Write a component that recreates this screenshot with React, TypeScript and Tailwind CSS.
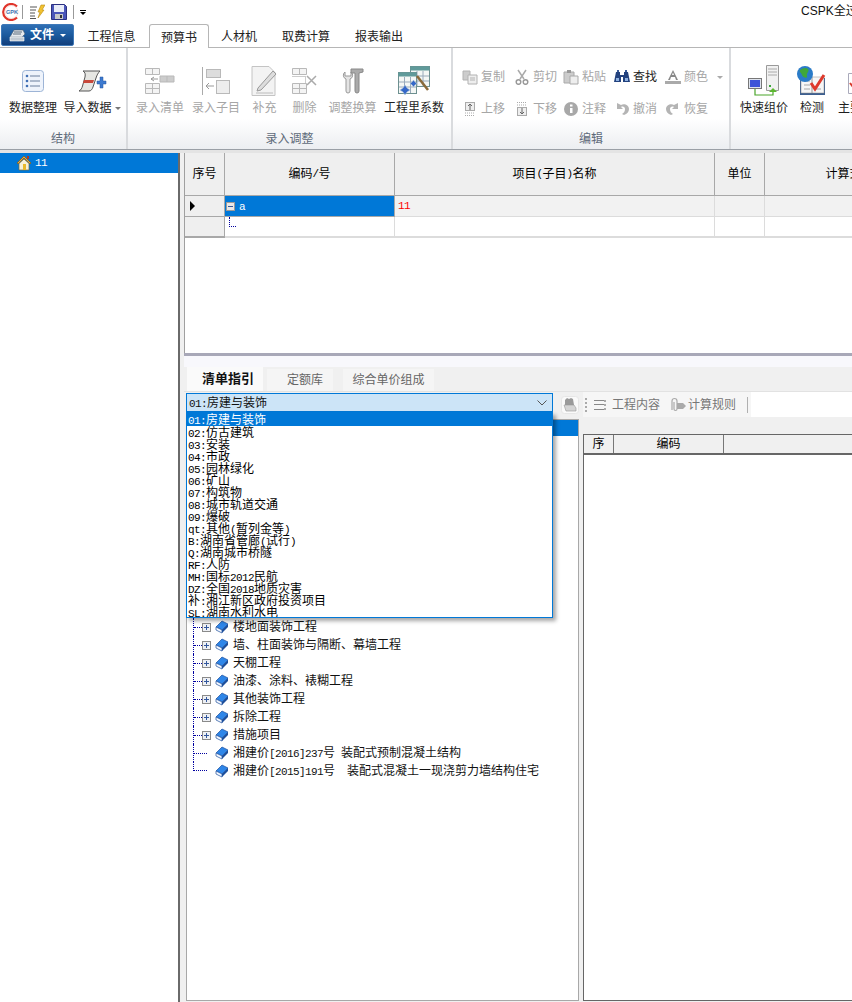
import React from 'react';

const font = "font-['Liberation_Sans','Noto_Sans_CJK_SC',sans-serif]";

function cn2(...c: (string | false | undefined)[]) {
  return c.filter(Boolean).join(' ');
}

// latin runs are narrower in the old app, 6px per char
function Mixed({ text }: { text: string }) {
  const parts = text.split(/([\x00-\x7f]+)/).filter(Boolean);
  return (
    <>
      {parts.map((p, i) =>
        /^[\x00-\x7f]/.test(p) ? (
          <span key={i} className="font-['Liberation_Mono',monospace] text-[11px] tracking-[-0.6px] whitespace-pre">{p}</span>
        ) : (
          <span key={i}>{p}</span>
        ),
      )}
    </>
  );
}

function AppLogo() {
  return (
    <svg width="18" height="18" viewBox="0 0 18 18">
      <circle cx="9" cy="9" r="7" fill="#fff" />
      <path d="M15 3.500A8 8 0 1 0 15 14.500" fill="none" stroke="#e0342a" strokeWidth="2.200" />
      <circle cx="9.500" cy="9" r="6.500" fill="none" stroke="#f3c4c0" strokeWidth=".6" />
      <text x="4" y="11" fontSize="5.500" fontWeight="700" fill="#3a6fb0" fontFamily="Liberation Sans">GPK</text>
    </svg>
  );
}

function QuickNote() {
  return (
    <svg width="16" height="16" viewBox="0 0 16 16">
      <path d="M1 3h7M1 6h6M1 9h5M1 12h5M1 14.500h6" stroke="#555" strokeWidth="1" />
      <path d="M12 1h4l-3 5h2l-6 8 2-6H9z" fill="#f2c230" stroke="#b98a10" strokeWidth=".6" />
    </svg>
  );
}

function SaveIcon() {
  return (
    <svg width="16" height="16" viewBox="0 0 16 16">
      <path d="M.5.5h13l2 2v13H.5z" fill="#4a55b8" stroke="#2b3080" />
      <rect x="3" y="1" width="10" height="7" fill="#e8ecf8" />
      <rect x="4" y="10" width="8" height="5" fill="#c8c8c8" />
      <rect x="9" y="11" width="2" height="3" fill="#333" />
    </svg>
  );
}

function ListIcon() {
  return (
    <svg width="22" height="22" viewBox="0 0 22 22">
      <rect x=".5" y=".5" width="21" height="21" rx="3" fill="#eef3fb" stroke="#9db4d6" />
      <g fill="#3f6fb5">
        <circle cx="5" cy="6" r="1.300" />
        <circle cx="5" cy="11" r="1.300" />
        <circle cx="5" cy="16" r="1.300" />
      </g>
      <path d="M8 6h10M8 11h10M8 16h10" stroke="#6b7f9c" strokeWidth="1" />
    </svg>
  );
}

function ImportIcon() {
  return (
    <svg width="30" height="22" viewBox="0 0 30 22">
      <path d="M6 1h17c-2 2-3 4-4 7l-3 9c-.6 2-2 4-4 4H2c2-1 3-3 3.500-5L8 7C8.600 4 8 2 6 1z" fill="#e6e6e2" stroke="#555" />
      <path d="M7 10h10l-1 3H6z" fill="#c8483a" />
      <path d="M20 11h3V7h3v4h3v3h-3v4h-3v-4h-3z" fill="#3d7ad0" stroke="#24549c" strokeWidth=".5" />
    </svg>
  );
}

function GridInIcon({ kind }: { kind: 'qd' | 'zm' | 'bc' | 'sc' }) {
  const s = '#b9b9b9';
  if (kind === 'qd') {
    return (
      <svg width="32" height="26" viewBox="0 0 32 26">
        <path d="M1.500.5h14v6h-14zM8.500.5v6M1.500 15.500h14v10h-14zM1.500 20.500h14M8.500 15.500v10" fill="#f4f4f4" stroke={s} />
        <path d="M16 8h14v6H16zM23 8v6" fill="#ccc" stroke={s} />
        <path d="M7 11h7M7 11l3-2M7 11l3 2" stroke="#999" fill="none" />
      </svg>
    );
  }
  if (kind === 'zm') {
    return (
      <svg width="28" height="28" viewBox="0 0 28 28">
        <path d="M.5 0v28" stroke="#aaa" />
        <rect x="4.500" y="2.500" width="14" height="8" fill="#ddd" stroke={s} />
        <rect x="14.500" y="13.500" width="13" height="13" fill="#eee" stroke={s} />
        <path d="M4 19h8M4 19l3-3M4 19l3 3" stroke="#999" fill="none" />
      </svg>
    );
  }
  if (kind === 'bc') {
    return (
      <svg width="28" height="30" viewBox="0 0 28 30">
        <path d="M1 .5h17l6 6V29.500H1z" fill="#f3f3f3" stroke="#c4c4c4" />
        <path d="M7 22 22 5l3 3L10 24l-4 1z" fill="#ddd" stroke="#999" />
        <path d="M5 27h17" stroke="#bbb" />
      </svg>
    );
  }
  return (
    <svg width="26" height="26" viewBox="0 0 26 26">
      <path d="M.5.5h14v6H.5zM7.500.5v6M.5 15.500h14v10H.5zM.5 20.500h14M7.500 15.500v10" fill="#f4f4f4" stroke={s} />
      <path d="M.5 8.500h13v6" stroke="#999" strokeDasharray="1 1" fill="none" />
      <path d="M15 8l9 9M24 8l-9 9" stroke="#aaa" strokeWidth="1.500" />
    </svg>
  );
}

function ToolsIcon() {
  return (
    <svg width="24" height="30" viewBox="0 0 24 30">
      <path d="M4 6a4 4 0 0 0 1 7v12a2 2 0 0 0 4 0V13a4 4 0 0 0 1-7v4H4z" fill="#e4e4e4" stroke="#999" />
      <path d="M10 3h12v3l-4 1v18a2 2 0 0 1-4 0V7h-4z" fill="#aaa" stroke="#888" />
    </svg>
  );
}

function QtyIcon() {
  return (
    <svg width="32" height="30" viewBox="0 0 32 30">
      <rect x="12.500" y=".5" width="19" height="20" fill="#f4f7f5" stroke="#6d9090" />
      <rect x="12.500" y=".5" width="19" height="4" fill="#5f9a9a" />
      <path d="M19 5v15M25 5v15M13 10h18M13 15h18" stroke="#9ab" />
      <rect x=".5" y="6.500" width="18" height="21" fill="#f4f7f5" stroke="#6d9090" />
      <rect x=".5" y="6.500" width="18" height="4" fill="#5f9a9a" />
      <path d="M6.500 11v16M12.500 11v16M1 16h17M1 21h17" stroke="#9ab" />
      <path d="m19 10 11 14" stroke="#8a6a3a" strokeWidth="2.500" />
      <path d="m5 22 2-3 2 3 3 2-3 2-2 3-2-3-3-2zM14 16l1.500-2 1.500 2 2 1.500-2 1.500-1.500 2-1.500-2-2-1.500z" fill="#3568c8" stroke="#bcd" strokeWidth=".5" />
    </svg>
  );
}

function ServerIcon() {
  return (
    <svg width="32" height="32" viewBox="0 0 32 32">
      <path d="M18.500.5h12v25h-12z" fill="#f1f1f1" stroke="#9a9a9a" />
      <path d="M20 4h9M20 7h9M20 10h9" stroke="#aaa" />
      <rect x="21" y="20" width="2" height="2" fill="#3aa53a" />
      <rect x=".5" y="13.500" width="13" height="10" fill="#dfe4ee" stroke="#777" />
      <rect x="2" y="15" width="10" height="7" fill="#3d55d8" />
      <path d="M7 24v6h18v-3" stroke="#4aa52a" fill="none" strokeWidth="1.200" />
      <path d="m21 27 4-4 4 4z" fill="#5cb82f" />
    </svg>
  );
}

function CheckIcon() {
  return (
    <svg width="32" height="32" viewBox="0 0 32 32">
      <path d="M4 13h25v17H4z" fill="#3d5f90" />
      <path d="M5 12h11v16H5zM16 12h12v16H16z" fill="#f6f6f6" stroke="#888" strokeWidth=".5" />
      <path d="M8 16h6M8 20h6M8 24h6M18 24h7" stroke="#a6a6a6" />
      <circle cx="9" cy="9" r="8" fill="#2a7bc8" />
      <path d="M4 5c3-2 6-3 8-1s-2 4-1 7-4 2-5-1-3-3-2-5z" fill="#3fa83a" />
      <path d="m15 18 4 6 9-14" fill="none" stroke="#de3a2c" strokeWidth="3" />
    </svg>
  );
}

function MainIcon() {
  return (
    <svg width="16" height="28" viewBox="0 0 16 28" className="shrink-0 translate-x-[5px]">
      <path d="M1.500 6.500h13v20h-13z" fill="#fff" stroke="#aab" />
      <rect x="5" y="2" width="8" height="6" fill="#f2c636" />
      <path d="m3 16 3 4 6-7" fill="none" stroke="#d83a2c" strokeWidth="2" />
    </svg>
  );
}

function Mini({ kind }: { kind: string }) {
  const c = '#b2b2b2';
  if (kind === 'copy') return <svg width="16" height="16" viewBox="0 0 16 16"><path d="M1 2h7v9H1z" fill="#ccc" stroke={c} /><path d="M6 6h9v9H6z" fill="#eee" stroke={c} /><path d="M8 9h5M8 11h5" stroke={c} /></svg>;
  if (kind === 'cut') return <svg width="16" height="16" viewBox="0 0 16 16"><path d="M4 1l6 9M12 1l-6 9" stroke="#aaa" strokeWidth="1.500" /><circle cx="4.500" cy="13" r="2.300" fill="none" stroke="#999" strokeWidth="1.500" /><circle cx="11.500" cy="13" r="2.300" fill="none" stroke="#999" strokeWidth="1.500" /></svg>;
  if (kind === 'paste') return <svg width="16" height="16" viewBox="0 0 16 16"><path d="M1 3h10v11H1z" fill="#ccc" stroke="#aaa" /><path d="M4 1h4v3H4z" fill="#999" /><path d="M7 7h8v8H7z" fill="#eee" stroke="#aaa" /></svg>;
  if (kind === 'find') return <svg width="16" height="16" viewBox="0 0 16 16"><path d="M2 3h4v3h4V3h4l2 10H9V8H7v5H0z" fill="#23427e" /><rect x="2" y="9" width="3" height="3" fill="#8eb0e0" /><rect x="11" y="9" width="3" height="3" fill="#8eb0e0" /><path d="M3 1h2v2H3zM11 1h2v2h-2z" fill="#3a5a98" /></svg>;
  if (kind === 'color') return <svg width="16" height="16" viewBox="0 0 16 16"><path d="M8 1l5 10h-2l-1-3H6l-1 3H3zM7 6h2L8 3.500z" fill="#888" fillRule="evenodd" /><rect y="12" width="16" height="3" fill="#aaa" /></svg>;
  if (kind === 'up') return <svg width="16" height="16" viewBox="0 0 16 16"><rect x="3.500" y="1.500" width="9" height="8" fill="#eee" stroke="#aaa" /><path d="M8 3v6M6 5l2-2 2 2" stroke="#666" fill="none" /><path d="M3 12h10M3 14.500h10" stroke="#aaa" strokeDasharray="1 1" /></svg>;
  if (kind === 'down') return <svg width="16" height="16" viewBox="0 0 16 16"><path d="M3 1.500h10M3 4h10" stroke="#aaa" strokeDasharray="1 1" /><rect x="3.500" y="6.500" width="9" height="8" fill="#eee" stroke="#aaa" /><path d="M8 7v6M6 11l2 2 2-2" stroke="#666" fill="none" /></svg>;
  if (kind === 'info') return <svg width="16" height="16" viewBox="0 0 16 16"><circle cx="8" cy="8" r="7" fill="#a8a8a8" /><rect x="7" y="7" width="2.500" height="5" fill="#fff" /><rect x="7" y="3.500" width="2.500" height="2" fill="#fff" /></svg>;
  if (kind === 'undo') return <svg width="16" height="16" viewBox="0 0 16 16"><path d="M3 2v6h6L7 6c2-1 4 0 4 2s-1 4-3 5l2 1c3-1 5-3 5-6 0-4-5-6-8-4z" fill="#b4b4b4" /></svg>;
  return <svg width="16" height="16" viewBox="0 0 16 16"><path d="M13 2v6H7l2-2C7 5 5 6 5 8s1 4 3 5l-2 1C3 13 1 11 1 8c0-4 5-6 8-4z" fill="#b4b4b4" /></svg>;
}

function BookIcon() {
  return (
    <svg width="14" height="14" viewBox="0 0 14 14" className="shrink-0">
      <path d="M1 7 7 1l6 3-6 6z" fill="#2f86e8" stroke="#1c4f9c" strokeWidth=".7" />
      <path d="m1 7 6 3v3L1 10z" fill="#f4f8ff" stroke="#1c4f9c" strokeWidth=".7" />
      <path d="m7 10 6-6v3l-6 6z" fill="#1c4f9c" />
    </svg>
  );
}

function HomeIcon() {
  return (
    <svg width="16" height="16" viewBox="0 0 16 16">
      <path d="M8 1 1 8l1 1 6-6 6 6 1-1z" fill="#e8a93c" stroke="#7a5a20" strokeWidth=".7" />
      <path d="M3 8.500 8 4l5 4.500V15H3z" fill="#f7f0d8" stroke="#7a6a3a" strokeWidth=".7" />
      <rect x="7" y="9" width="3" height="6" fill="#e8b92c" />
      <rect x="11" y="1" width="2" height="3" fill="#a83a2a" />
    </svg>
  );
}

function Large({ icon, label, disabled, w, arrow }: { icon: React.ReactNode; label: string; disabled?: boolean; w: string; arrow?: boolean }) {
  return (
    <div className={cn2('flex flex-col items-center shrink-0', w)}>
      <div className="h-[36px] flex items-center justify-center">{icon}</div>
      <div className={cn2('mt-[1px] h-[16px] leading-[16px] whitespace-nowrap text-[12px] flex items-center gap-[3px]', disabled ? 'text-[#a6a6a6]' : 'text-[#1e1e1e]')}>
        {label}
        {arrow && <span className="w-0 h-0 border-x-[3px] border-x-transparent border-t-[3px] border-t-[#777]" />}
      </div>
    </div>
  );
}

function Small({ kind, label, on, w }: { kind: string; label: string; on?: boolean; w: string }) {
  return (
    <div className={cn2('flex items-center gap-[3px] text-[12px] whitespace-nowrap', w, on ? 'text-[#1e1e1e]' : 'text-[#a6a6a6]')}>
      <Mini kind={kind} />
      <span>{label}</span>
    </div>
  );
}

function GroupLabel({ children }: { children: React.ReactNode }) {
  return <div className="absolute bottom-[2px] left-0 right-0 text-center text-[12px] leading-[16px] text-[#5f6b7a]">{children}</div>;
}

const dropdownItems = [
  '01:房建与装饰',
  '02:仿古建筑',
  '03:安装',
  '04:市政',
  '05:园林绿化',
  '06:矿山',
  '07:构筑物',
  '08:城市轨道交通',
  '09:爆破',
  'qt:其他(暂列金等)',
  'B:湖南省管廊(试行)',
  'Q:湖南城市桥隧',
  'RF:人防',
  'MH:国标2012民航',
  'DZ:全国2018地质灾害',
  '补:湘江新区政府投资项目',
  'SL:湖南水利水电',
];

const treeRows = [
  { label: '楼地面装饰工程', plus: true },
  { label: '墙、柱面装饰与隔断、幕墙工程', plus: true },
  { label: '天棚工程', plus: true },
  { label: '油漆、涂料、裱糊工程', plus: true },
  { label: '其他装饰工程', plus: true },
  { label: '拆除工程', plus: true },
  { label: '措施项目', plus: true },
  { label: '湘建价[2016]237号 装配式预制混凝土结构', plus: false },
  { label: '湘建价[2015]191号  装配式混凝土一现浇剪力墙结构住宅', plus: false },
];

export default function App() {
  return (
    <div className={cn2('w-[852px] h-[1002px] overflow-hidden bg-white flex flex-col text-[12px] text-black', font)}>
      {/* title bar */}
      <div className="h-[24px] shrink-0 flex items-center pl-[2px] pr-0 justify-between">
        <div className="flex items-center">
          <AppLogo />
          <span className="ml-[2px] w-px h-[14px] bg-[#999]" />
          <span className="ml-[6px]"><QuickNote /></span>
          <span className="ml-[6px]"><SaveIcon /></span>
          <span className="ml-[6px] w-px h-[14px] bg-[#999]" />
          <span className="ml-[6px] flex flex-col items-center gap-[1px]">
            <span className="w-[6px] h-px bg-black" />
            <span className="w-0 h-0 border-x-[3px] border-x-transparent border-t-[3px] border-t-black" />
          </span>
        </div>
        <div className="w-[51px] overflow-hidden whitespace-nowrap text-[12px] text-[#111] mb-[3px]">CSPK全过程造价</div>
      </div>

      {/* tabs */}
      <div className="h-[24px] shrink-0 flex items-end border-b border-[#b6b6b6] pl-[1px] text-[#222]">
        <div className="w-[73px] h-[22px] mb-[1px] rounded-[2px] bg-gradient-to-b from-[#2f6fb4] via-[#1b5a9e] to-[#123f7c] border border-[#3f79b8] text-white font-bold text-[12px] flex items-center pl-[7px] gap-[4px]">
          <svg width="17" height="15" viewBox="0 0 17 15" className="shrink-0">
            <path d="M1 9 5 2h9l2 4-3 3z" fill="#e6eaee" stroke="#47596b" strokeWidth=".6" />
            <path d="M5 4h8M4 6h8" stroke="#5a6a7a" />
            <path d="M1 9h14v4H1z" fill="#c2cad2" stroke="#fff" strokeWidth=".6" />
          </svg>
          文件
          <span className="ml-[2px] w-0 h-0 border-x-[3px] border-x-transparent border-t-[3px] border-t-white" />
        </div>
        <div className="w-[73px] ml-[1px] h-[23px] pt-[2px] flex items-center justify-center">工程信息</div>
        <div className="w-[60px] ml-[1px] h-[24px] pt-[2px] -mb-px bg-white border border-b-0 border-[#b6b6b6] rounded-t-[3px] flex items-center justify-center">预算书</div>
        <div className="w-[60px] h-[23px] pt-[2px] flex items-center justify-center">人材机</div>
        <div className="w-[74px] h-[23px] pt-[2px] flex items-center justify-center">取费计算</div>
        <div className="w-[72px] h-[23px] pt-[2px] flex items-center justify-center">报表输出</div>
      </div>

      {/* ribbon */}
      <div className="h-[102px] shrink-0 flex bg-gradient-to-b from-[#ffffff] via-[#ffffff] via-70% to-[#eceef1] border-b border-[#9a9fa6]">
        <div className="relative w-[128px] shrink-0 border-r-2 border-[#d9dbde] flex pl-[3px] pt-[15px]">
          <Large w="w-[60px]" icon={<ListIcon />} label="数据整理" />
          <Large w="w-[58px]" icon={<ImportIcon />} label="导入数据" arrow />
          <GroupLabel>结构</GroupLabel>
        </div>
        <div className="relative w-[325px] shrink-0 border-r-2 border-[#d9dbde] flex pl-[4px] pt-[15px]">
          <Large w="w-[56px]" disabled icon={<GridInIcon kind="qd" />} label="录入清单" />
          <Large w="w-[56px]" disabled icon={<GridInIcon kind="zm" />} label="录入子目" />
          <Large w="w-[41px]" disabled icon={<GridInIcon kind="bc" />} label="补充" />
          <Large w="w-[39px]" disabled icon={<GridInIcon kind="sc" />} label="删除" />
          <Large w="w-[57px]" disabled icon={<ToolsIcon />} label="调整换算" />
          <Large w="w-[66px]" icon={<QtyIcon />} label="工程里系数" />
          <GroupLabel>录入调整</GroupLabel>
        </div>
        <div className="relative w-[278px] shrink-0 border-r-2 border-[#d9dbde] pl-[9px] pt-[21px]">
          <div className="flex items-center h-[16px]">
            <Small w="w-[52px]" kind="copy" label="复制" />
            <Small w="w-[49px]" kind="cut" label="剪切" />
            <Small w="w-[51px]" kind="paste" label="粘贴" />
            <Small w="w-[51px]" kind="find" label="查找" on />
            <Small w="w-[52px]" kind="color" label="颜色" />
            <span className="w-0 h-0 border-x-[3px] border-x-transparent border-t-[3px] border-t-[#aaa]" />
          </div>
          <div className="flex items-center h-[16px] mt-[16px]">
            <Small w="w-[52px]" kind="up" label="上移" />
            <Small w="w-[49px]" kind="down" label="下移" />
            <Small w="w-[51px]" kind="info" label="注释" />
            <Small w="w-[51px]" kind="undo" label="撤消" />
            <Small w="w-[52px]" kind="redo" label="恢复" />
          </div>
          <GroupLabel>编辑</GroupLabel>
        </div>
        <div className="flex pl-[4px] pt-[15px]">
          <Large w="w-[58px]" icon={<ServerIcon />} label="快速组价" />
          <Large w="w-[38px]" icon={<CheckIcon />} label="检测" />
          <Large w="w-[34px] ml-[2px]" icon={<MainIcon />} label="主要" />
        </div>
      </div>

      {/* thin strip under the ribbon */}
      <div className="h-[3px] shrink-0 bg-[#e4e4e4]" />

      {/* main */}
      <div className="flex-1 min-h-0 flex bg-[#f0f0f0]">
        <div className="w-[180px] shrink-0 bg-white border-r-2 border-[#6a6a6a]">
          <div className="h-[20px] bg-[#0078d7] text-white flex items-center pl-[16px] gap-[3px]">
            <HomeIcon />
            <Mixed text="11" />
          </div>
        </div>

        <div className="flex-1 min-w-0 ml-[4px] flex flex-col overflow-hidden">
          {/* budget grid */}
          <div className="h-[200px] shrink-0 bg-white border-l border-[#a0a0a0] overflow-hidden">
            <div className="grid grid-cols-[40px_170px_320px_50px_200px] w-[780px]">
              {[
                ['序号', ''],
                ['编码/号', ''],
                ['项目(子目)名称', ''],
                ['单位', ''],
                ['计算式', 'pr-[42px]'],
              ].map(([t, extra]) => (
                <div key={t} className={cn2('h-[43px] bg-[#efefef] border-r border-b border-[#a8a8a8] flex items-center justify-center text-[12px] text-black', extra)}>
                  <Mixed text={t} />
                </div>
              ))}

              <div className="h-[21px] bg-[#efefef] border-r border-b border-[#a8a8a8] flex items-center pl-[5px]">
                <span className="w-0 h-0 border-y-[5px] border-y-transparent border-l-[5px] border-l-black" />
              </div>
              <div className="h-[21px] bg-[#0078d7] border-r border-b border-[#a8a8a8] flex items-center text-white">
                <span className="ml-[1px] w-[9px] h-[9px] bg-[#e8e8e8] border border-[#999] flex items-center justify-center">
                  <span className="w-[5px] h-px bg-[#33589c]" />
                </span>
                <span className="ml-[4px]"><Mixed text="a" /></span>
              </div>
              <div className="h-[21px] bg-[#f2f2f2] border-r border-b border-[#dcdcdc] flex items-center pl-[3px] text-[#f00]"><Mixed text="11" /></div>
              <div className="h-[21px] bg-[#f2f2f2] border-r border-b border-[#dcdcdc]" />
              <div className="h-[21px] bg-[#f2f2f2] border-b border-[#dcdcdc]" />

              <div className="h-[21px] bg-[#efefef] border-r border-b-2 border-[#a8a8a8]" />
              <div className="h-[21px] border-r border-b-2 border-[#dcdcdc] pl-[4px]">
                <div className="w-[7px] h-[10px] border-l border-b border-dotted border-[#0000a0]" />
              </div>
              <div className="h-[21px] border-r border-b-2 border-[#dcdcdc]" />
              <div className="h-[21px] border-r border-b-2 border-[#dcdcdc]" />
              <div className="h-[21px] border-b-2 border-[#dcdcdc]" />
            </div>
          </div>

          <div className="h-[3px] shrink-0 bg-[#a8a8b8]" />
          <div className="h-[11px] shrink-0 bg-[#f8f8fc]" />

          {/* bottom tabs */}
          <div className="relative flex-1 min-h-0 flex flex-col">
            <div className="h-[25px] shrink-0 flex items-end pl-[3px] text-[12px] border-b border-[#e2e2e2]">
              <div className="w-[76px] h-[24px] pl-[6px] bg-[#fafafa] flex items-center justify-center font-bold text-[13px] text-[#111]">清单指引</div>
              <div className="ml-[4px] w-[66px] h-[22px] pl-[10px] bg-[#f5f5f5] flex items-center justify-center text-[#666]">定额库</div>
              <div className="ml-[10px] w-[91px] h-[22px] bg-[#f5f5f5] flex items-center justify-center text-[#666]">综合单价组成</div>
            </div>

            <div className="h-[25px] shrink-0 flex items-center">
              <div className="w-[376px] shrink-0" />
              <svg width="18" height="18" viewBox="0 0 18 18" className="ml-[1px]">
                <rect x=".5" y=".5" width="17" height="17" rx="3" fill="#fafafa" stroke="#e6e6e6" />
                <path d="M4 9V4l2-2 2 1 2-1 2 1 1 6z" fill="#9a9a9a" />
                <path d="M3 9h10l2 3v3H5z" fill="#d4d4d4" stroke="#999" strokeWidth=".6" />
              </svg>
              <div className="ml-[4px] h-[25px] flex items-center bg-[#f6f6f6] text-[#777] pl-[2px] w-[168px]">
                <span className="w-[2px] h-[14px] border-l-2 border-dotted border-[#aaa]" />
                <span className="ml-[7px] w-[10px] h-[10px] border-y border-[#888] flex items-center"><span className="w-full h-px bg-[#888]" /></span>
                <span className="w-[2px] h-[10px] border-l-2 border-dotted border-[#aaa]" />
                <span className="ml-[6px]">工程内容</span>
                <svg width="18" height="16" viewBox="0 0 18 16" className="ml-[9px]">
                  <path d="M3 13V4a2.500 2.500 0 0 1 5 0v8a1.500 1.500 0 0 1-3 0V5" fill="none" stroke="#aaa" strokeWidth="1.200" />
                  <path d="M8 6h6l3 3-3 3H8z" fill="#aaa" />
                </svg>
                <span className="ml-[1px]">计算规则</span>
                <span className="ml-[11px] w-px h-[16px] bg-[#b0b0b0]" />
              </div>
              <div className="flex-1 h-[25px] bg-white" />
            </div>

            <div className="flex-1 min-h-0 flex pl-[2px] pb-[1px] pt-[2px]">
              {/* tree */}
              <div className="w-[393px] shrink-0 bg-white border border-[#a8a8a8]">
                <div className="h-[16px] bg-[#0078d7]" />
                <div className="h-[182px]" />
                {treeRows.map((r, i) => (
                  <div key={r.label} className="h-[18px] flex items-center pl-[6px] whitespace-nowrap text-[#111]">
                    <div className={cn2('relative border-l border-dotted border-[#0000a0] shrink-0', r.plus ? 'w-[9px]' : 'w-[14px]', i === treeRows.length - 1 ? 'h-[9px] self-start' : 'h-[18px]')}>
                      <span className={cn2('absolute left-0 right-0 border-t border-dotted border-[#0000a0]', i === treeRows.length - 1 ? 'bottom-0' : 'top-[9px]')} />
                    </div>
                    {r.plus ? (
                      <span className="w-[9px] h-[9px] bg-[#eef0f4] border border-[#8a8a8a] flex items-center justify-center shrink-0 relative">
                        <span className="absolute w-[5px] h-px bg-[#33589c]" />
                        <span className="absolute w-px h-[5px] bg-[#33589c]" />
                      </span>
                    ) : (
                      <span className="w-[4px] shrink-0" />
                    )}
                    <span className="ml-[4px]"><BookIcon /></span>
                    <span className="ml-[4px]"><Mixed text={r.label} /></span>
                  </div>
                ))}
              </div>

              {/* right detail grid */}
              <div className="ml-[4px] flex-1 min-w-0 flex flex-col pt-[15px]">
                <div className="flex-1 bg-white border-l border-[#666] border-b overflow-hidden">
                  <div className="h-[21px] flex border-t border-b-2 border-[#666] bg-[#f0f0f0] text-[12px] text-black">
                    <div className="w-[30px] border-r border-[#777] flex items-center justify-center">序</div>
                    <div className="w-[110px] border-r border-[#777] flex items-center justify-center">编码</div>
                    <div className="flex-1" />
                  </div>
                </div>
              </div>
            </div>

            {/* combobox with its open list, lies over the tree */}
            <div className="absolute left-[2px] top-[26px] w-[367px] z-10">
              <div className="h-[19px] bg-[#cce4f7] border border-[#0078d7] flex items-center justify-between pl-[2px] pr-[5px]">
                <span className="text-[#111] pt-[2px]"><Mixed text="01:房建与装饰" /></span>
                <svg width="10" height="6" viewBox="0 0 10 6"><path d="M.5.5 5 5 9.500.5" fill="none" stroke="#555" /></svg>
              </div>
              <div className="bg-white border border-[#0078d7] shadow-[3px_3px_4px_rgba(0,0,0,.35)] h-[206px] overflow-hidden">
                {dropdownItems.map((item, i) => (
                  <div key={item} className={cn2('leading-[12px] pl-[1px] whitespace-nowrap', i === 0 ? 'bg-[#0078d7] text-white h-[13px]' : 'text-black h-[12px]')}>
                    <span className="relative top-[1px]"><Mixed text={item} /></span>
                  </div>
                ))}
              </div>
            </div>
          </div>
        </div>
      </div>
    </div>
  );
}
